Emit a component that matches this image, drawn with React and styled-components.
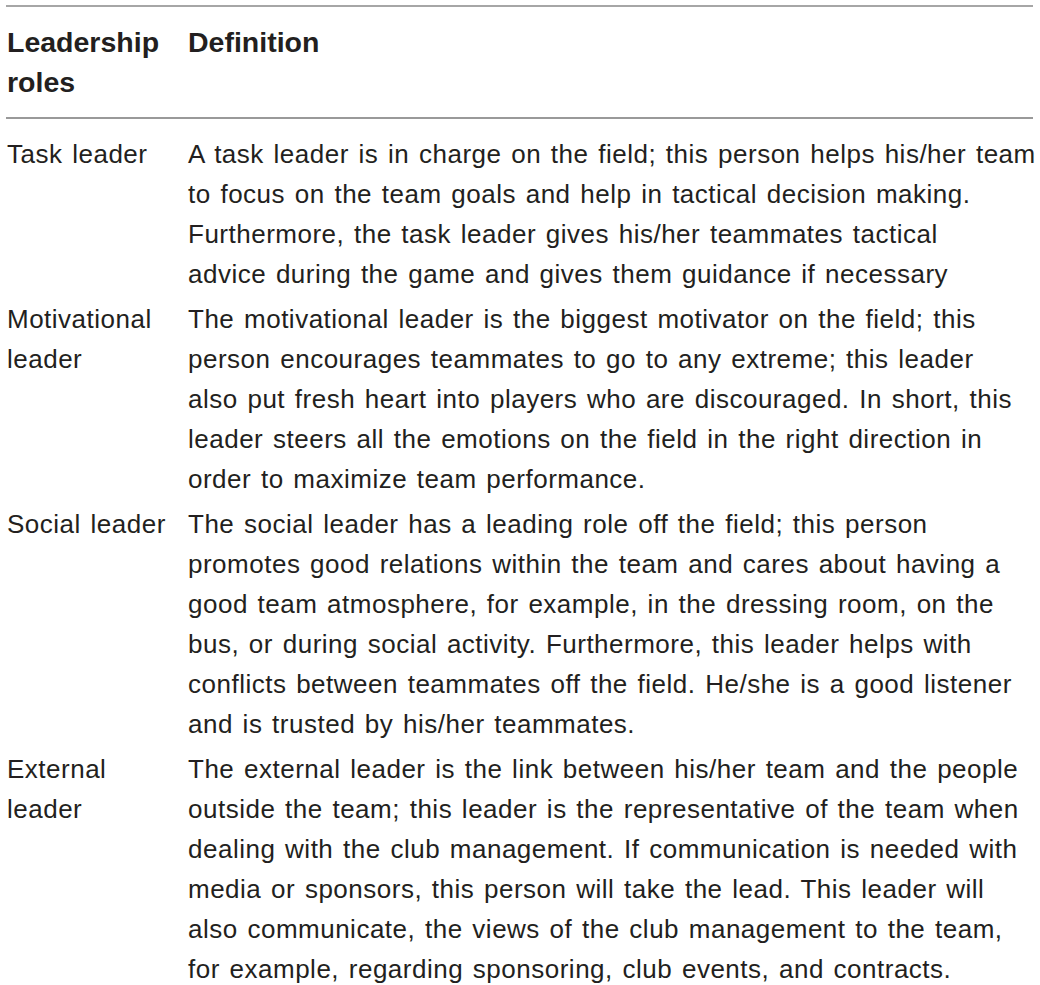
import React from "react";
import styled, { createGlobalStyle } from "styled-components";

const Global = createGlobalStyle`
  html, body { margin: 0; padding: 0; background: #ffffff; }
  body { font-family: "Liberation Sans", Arial, sans-serif; color: #231f20; }
`;

const Table = styled.div`
  margin: 5px 0 0 6px;
  width: 1027px;
  border-top: 2px solid #a6a6a6;
`;

const Row = styled.div`
  display: grid;
  grid-template-columns: 181px 1fr;
  padding: ${(p) => p.$pad || "2px 0 3px"};
  border-bottom: ${(p) => (p.$rule ? "2px solid #999999" : "none")};
`;

const Cell = styled.div`
  font-size: ${(p) => (p.$bold ? "28.5px" : "26px")};
  line-height: 40px;
  font-weight: ${(p) => (p.$bold ? 700 : 400)};
  letter-spacing: ${(p) => (p.$bold ? "0" : "0.5px")};
  word-spacing: ${(p) => (p.$bold ? "0" : "2px")};
  padding-left: 1px;
`;

const Line = styled.span`
  display: block;
  white-space: nowrap;
`;

const rows = [
  {
    role: ["Task leader"],
    def: [
      "A task leader is in charge on the field; this person helps his/her team",
      "to focus on the team goals and help in tactical decision making.",
      "Furthermore, the task leader gives his/her teammates tactical",
      "advice during the game and gives them guidance if necessary",
    ],
  },
  {
    role: ["Motivational", "leader"],
    def: [
      "The motivational leader is the biggest motivator on the field; this",
      "person encourages teammates to go to any extreme; this leader",
      "also put fresh heart into players who are discouraged. In short, this",
      "leader steers all the emotions on the field in the right direction in",
      "order to maximize team performance.",
    ],
  },
  {
    role: ["Social leader"],
    def: [
      "The social leader has a leading role off the field; this person",
      "promotes good relations within the team and cares about having a",
      "good team atmosphere, for example, in the dressing room, on the",
      "bus, or during social activity. Furthermore, this leader helps with",
      "conflicts between teammates off the field. He/she is a good listener",
      "and is trusted by his/her teammates.",
    ],
  },
  {
    role: ["External", "leader"],
    def: [
      "The external leader is the link between his/her team and the people",
      "outside the team; this leader is the representative of the team when",
      "dealing with the club management. If communication is needed with",
      "media or sponsors, this person will take the lead. This leader will",
      "also communicate, the views of the club management to the team,",
      "for example, regarding sponsoring, club events, and contracts.",
    ],
  },
];

const Lines = ({ items }) => items.map((t, i) => <Line key={i}>{t}</Line>);

export default function App() {
  return (
    <>
      <Global />
      <Table>
        <Row $rule $pad="15px 0 15px">
          <Cell $bold>
            <Lines items={["Leadership", "roles"]} />
          </Cell>
          <Cell $bold>
            <Lines items={["Definition"]} />
          </Cell>
        </Row>
        <Row $pad="15px 0 3px">
          <Cell>
            <Lines items={rows[0].role} />
          </Cell>
          <Cell>
            <Lines items={rows[0].def} />
          </Cell>
        </Row>
        {rows.slice(1).map((r, i) => (
          <Row key={i}>
            <Cell>
              <Lines items={r.role} />
            </Cell>
            <Cell>
              <Lines items={r.def} />
            </Cell>
          </Row>
        ))}
      </Table>
    </>
  );
}
